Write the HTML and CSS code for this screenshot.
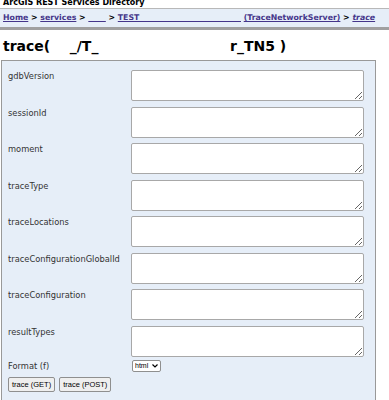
FILE: index.html
```html
<!DOCTYPE html>
<html lang="en">
<head>
    <meta charset="UTF-8">
    <meta name="viewport" content="width=device-width, initial-scale=1.0">
    <title>trace (TraceNetworkServer)</title>
    <link rel="stylesheet" href="styles.css">
</head>
<body>
    <div class="site-title">ArcGIS REST Services Directory</div>

    <div class="breadcrumbs">
        <a href="#">Home</a> &gt;
        <a href="#">services</a> &gt;
        <a href="#">&nbsp;_&nbsp;&nbsp;&nbsp;&nbsp;</a> &gt;
        <a href="#">TEST_&nbsp;&nbsp;&nbsp;&nbsp;&nbsp;&nbsp;&nbsp;&nbsp;&nbsp;&nbsp;&nbsp;&nbsp;&nbsp;&nbsp;&nbsp;&nbsp;&nbsp;&nbsp;&nbsp;&nbsp;&nbsp;&nbsp;&nbsp;&nbsp;&nbsp;&nbsp;&nbsp;&nbsp;&nbsp;&nbsp;&nbsp;&nbsp;&nbsp;&nbsp;&nbsp;&nbsp;</a>
        <a href="#">(TraceNetworkServer)</a> &gt;
        <a href="#"><i>trace</i></a>
    </div>

    <h2 class="page-title">trace( &nbsp;&nbsp;&nbsp;_/T_&nbsp;&nbsp;&nbsp;&nbsp;&nbsp;&nbsp;&nbsp;&nbsp;&nbsp;&nbsp;&nbsp;&nbsp;&nbsp;&nbsp;&nbsp;&nbsp;&nbsp;&nbsp;&nbsp;&nbsp;&nbsp;&nbsp;&nbsp;&nbsp;&nbsp;&nbsp;&nbsp;r_TN5 )</h2>

    <form class="op-form" action="#" onsubmit="return false;">
        <div class="form-grid">
            <label for="gdbVersion">gdbVersion</label>
            <textarea id="gdbVersion"></textarea>

            <label for="sessionId">sessionId</label>
            <textarea id="sessionId"></textarea>

            <label for="moment">moment</label>
            <textarea id="moment"></textarea>

            <label for="traceType">traceType</label>
            <textarea id="traceType"></textarea>

            <label for="traceLocations">traceLocations</label>
            <textarea id="traceLocations"></textarea>

            <label for="traceConfigurationGlobalId">traceConfigurationGlobalId</label>
            <textarea id="traceConfigurationGlobalId"></textarea>

            <label for="traceConfiguration">traceConfiguration</label>
            <textarea id="traceConfiguration"></textarea>

            <label for="resultTypes">resultTypes</label>
            <textarea id="resultTypes"></textarea>

            <label for="f" class="format-label">Format (f)</label>
            <div class="format-cell">
                <select id="f">
                    <option>html</option>
                    <option>json</option>
                    <option>pjson</option>
                </select>
            </div>
        </div>

        <div class="buttons">
            <button type="submit">trace (GET)</button>
            <button type="submit">trace (POST)</button>
        </div>
    </form>
</body>
</html>
```

FILE: styles.css
```css
body {
    margin: 0;
    font-family: "DejaVu Sans", Verdana, sans-serif;
    color: #000;
    background: #fff;
    overflow: hidden;
}
.site-title {
    font-weight: bold;
    font-size: 8px;
    line-height: 10px;
    margin-top: -2px;
    padding-left: 3px;
}
.breadcrumbs {
    margin-top: 0;
    padding: 3px 3px 4px;
    font-size: 7.8px;
    font-weight: bold;
    line-height: 11px;
    white-space: nowrap;
    background: #e6eef8;
    border-top: 1px solid #b8b8b8;
    border-bottom: 3px solid #a0a0a0;
}
.breadcrumbs a {
    color: #44358a;
}
.page-title {
    margin: 8px 0 0 3px;
    font-size: 14px;
    line-height: 17px;
    font-weight: bold;
    white-space: nowrap;
}
.op-form {
    margin: 5px 0 0 1px;
    width: 373px;
    height: 400px;
    background: #e6eef8;
    border: 1px solid #999;
    border-bottom: none;
}
.form-grid {
    display: grid;
    grid-template-columns: 123px 233px;
    row-gap: 5.5px;
    padding: 9px 0 0 6px;
    align-items: start;
}
.form-grid label {
    font-size: 8.3px;
    line-height: 10px;
    color: #333;
    padding-top: 1px;
}
.form-grid textarea {
    box-sizing: border-box;
    width: 233px;
    height: 31px;
    margin: 0;
    border: 1px solid #a8a8a8;
    border-radius: 2px;
    background: #fff;
}
.format-label {
    padding-top: 0;
    margin-top: -2px;
}
.format-cell {
    display: flex;
    margin-top: -2px;
}
.format-cell select {
    appearance: none;
    box-sizing: border-box;
    width: 29px;
    height: 12px;
    margin-left: 1px;
    padding: 0 0 0 2px;
    font-family: "Liberation Sans", Arial, sans-serif;
    font-size: 7px;
    line-height: 10px;
    border: 1px solid #8f8f8f;
    border-radius: 2px;
    background: #fff url("data:image/svg+xml,%3Csvg xmlns='http://www.w3.org/2000/svg' width='6' height='4'%3E%3Cpath d='M0.5 0.5 L3 3 L5.5 0.5' fill='none' stroke='%23000' stroke-width='1.2'/%3E%3C/svg%3E") no-repeat right 2px center;
    color: #000;
}
.buttons {
    display: flex;
    gap: 4px;
    padding: 5px 0 0 6px;
}
.buttons button {
    font-family: "Liberation Sans", Arial, sans-serif;
    font-size: 7.5px;
    height: 15px;
    padding: 0 3px;
    border: 1px solid #8f8f8f;
    border-radius: 2px;
    background: #efefef;
    color: #000;
    cursor: pointer;
}
```
